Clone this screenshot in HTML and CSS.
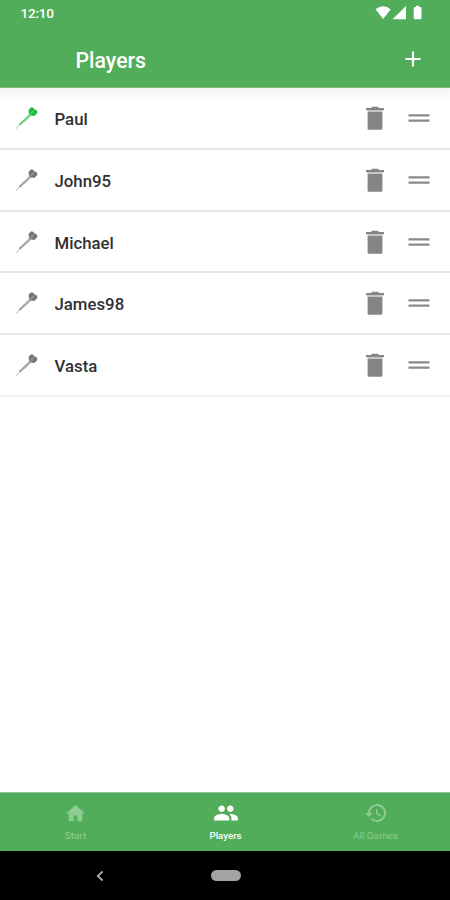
FILE: index.html
```
<!DOCTYPE html>
<html lang="en">
<head>
<meta charset="utf-8">
<title>Players</title>
<link rel="stylesheet" href="styles.css">
</head>
<body>
<svg class="defs" width="0" height="0">
  <symbol id="dart" viewBox="0 0 24 24">
    <path d="M1.300 22.700L6 17" stroke="currentColor" stroke-width=".9" opacity=".6"/>
    <path d="M4.700 18.800L9.200 14.600" stroke="currentColor" stroke-width="2" opacity=".7"/>
    <path d="M9 14.800L15.500 8.500" stroke="currentColor" stroke-width="2.500" opacity=".6"/>
    <path d="M13.600 3.800L16.200 1.300L18.600 2L19.500 3.500L22 4.600L22.400 7L19.400 9.900L16 9.500L14 7.600Z" fill="currentColor"/>
    <path d="M15.500 7.800L18.600 4.900" stroke="#fff" stroke-width=".9" opacity=".5"/>
  </symbol>
  <symbol id="trash" viewBox="0 0 20 26">
    <path d="M1 3H6L7 1.800H13L14 3H19V5.200H1Z" fill="#858587"/>
    <path d="M2.600 5H17.400V7.500H2.600Z" fill="#c4c4c6"/>
    <path d="M2.600 7H17.400V23.500Q17.400 24.800 16.100 24.800H3.900Q2.600 24.800 2.600 23.500Z" fill="#858587"/>
  </symbol>
  <symbol id="handle" viewBox="0 0 22 10">
    <path d="M.5 2.300H21.500M.5 7.600H21.500" stroke="#8a8a8c" stroke-width="2.300"/>
  </symbol>
</svg>
<header class="top">
  <div class="status">
    <span class="time">12:10</span>
    <svg width="48" height="16" viewBox="0 0 48 16" fill="#fff">
      <path d="M.5 4.300Q8 -1.600 15.700 4.300L8.100 14Z"/>
      <path d="M31 1V14.300H17.500Z"/>
      <path d="M41 .8H44.200V2H45.200Q46.500 2 46.500 3.300V13Q46.500 14.300 45.200 14.300H40Q38.700 14.300 38.700 13V3.300Q38.700 2 40 2H41Z"/>
    </svg>
  </div>
  <div class="appbar">
    <h1>Players</h1>
    <svg width="16" height="16" viewBox="0 0 16 16"><path d="M8 .6V15.400M.5 8H15.500" stroke="#fff" stroke-width="2.100"/></svg>
  </div>
</header>
<main>
  <ul class="list">
    <li class="active"><svg class="dart"><use href="#dart"/></svg><span>Paul</span><svg class="trash"><use href="#trash"/></svg><svg class="handle"><use href="#handle"/></svg></li>
    <li><svg class="dart"><use href="#dart"/></svg><span>John95</span><svg class="trash"><use href="#trash"/></svg><svg class="handle"><use href="#handle"/></svg></li>
    <li><svg class="dart"><use href="#dart"/></svg><span>Michael</span><svg class="trash"><use href="#trash"/></svg><svg class="handle"><use href="#handle"/></svg></li>
    <li><svg class="dart"><use href="#dart"/></svg><span>James98</span><svg class="trash"><use href="#trash"/></svg><svg class="handle"><use href="#handle"/></svg></li>
    <li><svg class="dart"><use href="#dart"/></svg><span>Vasta</span><svg class="trash"><use href="#trash"/></svg><svg class="handle"><use href="#handle"/></svg></li>
  </ul>
</main>
<nav class="tabs">
  <a><svg width="23" height="23" viewBox="0 0 24 24" fill="currentColor"><path d="M10 20v-6h4v6h5v-8h3L12 3 2 12h3v8z"/></svg><span>Start</span></a>
  <a class="current"><svg width="26" height="26" viewBox="0 0 24 24" fill="currentColor"><path d="M16 11c1.660 0 2.990-1.340 2.990-3S17.660 5 16 5s-3 1.340-3 3 1.340 3 3 3zm-8 0c1.660 0 2.990-1.340 2.990-3S9.660 5 8 5 5 6.340 5 8s1.340 3 3 3zm0 2c-2.330 0-7 1.170-7 3.500V19h14v-2.500c0-2.330-4.670-3.500-7-3.500zm8 0c-.29 0-.62.02-.97.05 1.160.84 1.970 1.970 1.970 3.450V19h6v-2.500c0-2.330-4.670-3.500-7-3.500z"/></svg><span>Players</span></a>
  <a><svg width="24" height="24" viewBox="0 0 24 24" fill="currentColor"><path d="M13 3a9 9 0 0 0-9 9H1l3.890 3.890.07.14L9 12H6a7 7 0 1 1 2.060 4.940l-1.420 1.420A9 9 0 1 0 13 3zm-1 5v5l4.280 2.540.72-1.210-3.500-2.080V8H12z"/></svg><span>All Games</span></a>
</nav>
<footer class="system">
  <svg width="8" height="12" viewBox="0 0 8 12" fill="none"><path d="M6.600 1.500L1.800 6L6.600 10.500" stroke="#aaa" stroke-width="1.900"/></svg>
  <i class="pill"></i>
</footer>
</body>
</html>
```
FILE: styles.css
```
* { box-sizing: border-box; }
body {
  margin: 0;
  width: 450px;
  height: 900px;
  display: flex;
  flex-direction: column;
  overflow: hidden;
  background: #fff;
  font-family: Roboto, "Liberation Sans", sans-serif;
}
svg { display: block; flex: none; }
.defs { position: absolute; }
.top {
  height: 88px;
  background: #51ad59;
  color: #fff;
  border-bottom: 1px solid #78b87d;
}
.status {
  height: 30px;
  padding: 5px 27px 0 20.500px;
  display: flex;
  justify-content: space-between;
}
.time {
  font: 500 13.500px/16px Roboto, sans-serif;
  letter-spacing: -.2px;
}
.appbar {
  height: 58px;
  padding: 0 29px 0 75.500px;
  display: flex;
  align-items: center;
  justify-content: space-between;
}
h1 {
  margin: 3px 0 0;
  font-size: 21.300px;
  line-height: 28px;
  font-weight: 500;
}
main {
  flex: 1;
  background: linear-gradient(#f3f4f3, #fff 12px);
}
.list { margin: 0; padding: .4px 0 0; list-style: none; }
.list li {
  height: 61.700px;
  padding: 0 20px 0 15px;
  display: flex;
  align-items: center;
  border-bottom: 2px solid #e8e8e9;
  color: #77777a;
}
.list li:last-child { border-color: #f3f3f3; }
.list .active { color: #20bd3b; }
.list span {
  flex: 1;
  margin-left: 15.500px;
  color: #303032;
  font-size: 16.800px;
  font-weight: 500;
  line-height: 22px;
  padding-top: 2px;
}
.dart { width: 24px; height: 24px; }
.trash { width: 20px; height: 26px; }
.handle { width: 22px; height: 10px; margin-left: 23px; }
.tabs {
  height: 59px;
  background: #51ad59;
  border-top: 1px solid #8bc690;
  display: flex;
}
.tabs a {
  flex: 1;
  display: grid;
  grid-template-rows: 34px 12px;
  align-content: start;
  padding: 3px 0 0 1px;
  justify-items: center;
  align-items: center;
  color: #8dcd93;
  font-size: 9.900px;
}
.tabs span { line-height: 12px; }
.tabs .current { color: #fff; font-weight: 500; font-size: 9.700px; }
.system {
  height: 49px;
  background: #000;
  display: flex;
  align-items: center;
  padding-left: 95.500px;
}
.pill {
  width: 30px;
  height: 11px;
  margin-left: 107px;
  border-radius: 6px;
  background: #a3a3a3;
}
```
